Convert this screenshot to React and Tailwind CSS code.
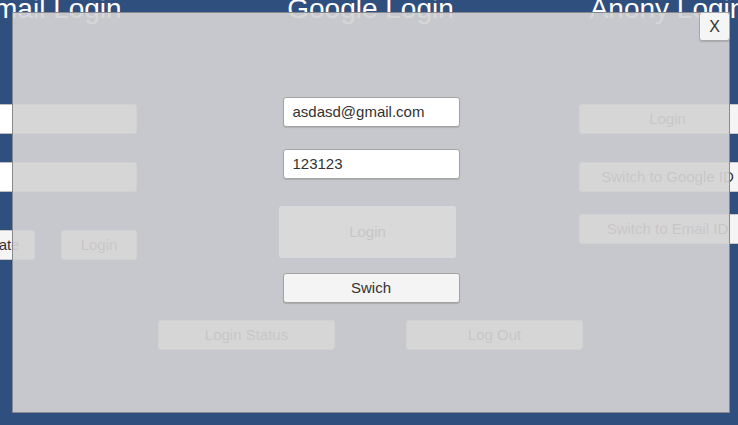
import React from 'react'

const font = { fontFamily: '"Liberation Sans", Arial, sans-serif' }

function BgButton({ label, small = false, className = '' }) {
  return (
    <div className={`${small ? 'w-[76px]' : 'w-[177px]'} h-[30px] shrink-0 rounded-[3px] border border-[#c8c8c8] bg-[#f5f5f5] flex items-center justify-center text-[15px] text-[#323232] whitespace-nowrap ${className}`}>
      {label}
    </div>
  )
}

function BgInput() {
  return <div className="h-[30px] w-[177px] rounded-[3px] border border-[#bdbdbd] bg-white" />
}

function Title({ children }) {
  return (
    <div className="mt-[-5px] h-[28px] leading-[28px] text-center text-[28px] text-white whitespace-nowrap">
      {children}
    </div>
  )
}

function Background() {
  return (
    <div className="flex flex-col">
      <div className="flex h-[260px] ml-[-40px]">
        {/* Email column */}
        <div className="w-[177px] shrink-0 flex flex-col">
          <Title>Email Login</Title>
          <div className="mt-[81px]"><BgInput /></div>
          <div className="mt-[28px]"><BgInput /></div>
          <div className="mt-[38px] flex justify-between ml-[-1px]">
            <BgButton label="Create" small />
            <BgButton label="Login" small />
          </div>
        </div>
        {/* Google column */}
        <div className="ml-[145px] w-[177px] shrink-0 flex flex-col">
          <Title>Google Login</Title>
        </div>
        {/* Anony column */}
        <div className="ml-[120px] w-[177px] shrink-0 flex flex-col">
          <Title>Anony Login</Title>
          <BgButton label="Login" className="mt-[81px]" />
          <BgButton label="Switch to Google ID" className="mt-[28px]" />
          <BgButton label="Switch to Email ID" className="mt-[22px]" />
        </div>
      </div>
      <div className="mt-[60px] flex ml-[158px]">
        <BgButton label="Login Status" />
        <BgButton label="Log Out" className="ml-[71px]" />
      </div>
    </div>
  )
}

function Popup() {
  return (
    <div className="absolute left-[12px] top-[12px] w-[718px] h-[401px] border border-[rgba(128,130,136,0.9)] bg-[rgba(212,210,212,0.92)] flex flex-col items-center">
      <button className="self-end mt-[-1px] mr-[-1px] w-[31px] h-[29px] rounded-[3px] border border-[#a8a8a8] bg-[#f5f5f5] text-[16px] text-[#323232] flex items-center justify-center shadow-[0_1px_1px_rgba(0,0,0,0.15)]">
        X
      </button>
      <div className="mt-[56px] w-[177px] h-[30px] rounded-[3px] border border-[#a4a4a4] bg-white flex items-center px-[9px] text-[15px] text-[#323232] shadow-[0_1px_1px_rgba(0,0,0,0.12)]">
        asdasd@gmail.com
      </div>
      <div className="mt-[22px] w-[177px] h-[30px] rounded-[3px] border border-[#a4a4a4] bg-white flex items-center px-[9px] text-[15px] text-[#323232] shadow-[0_1px_1px_rgba(0,0,0,0.12)]">
        123123
      </div>
      <div className="mt-[27px] ml-[-7px] w-[177px] h-[52px] rounded-[3px] bg-[#d9d9d9] flex items-center justify-center text-[15px] text-[#c6c6c6]">
        Login
      </div>
      <button className="mt-[15px] w-[177px] h-[30px] rounded-[3px] border border-[#a4a4a4] bg-[#f4f4f4] flex items-center justify-center text-[15px] text-[#323232] shadow-[0_1px_1px_rgba(0,0,0,0.15)]">
        Swich
      </button>
    </div>
  )
}

export default function App() {
  return (
    <div className="relative w-[738px] h-[425px] overflow-hidden bg-[#2f4f7e]" style={font}>
      <Background />
      <Popup />
    </div>
  )
}
